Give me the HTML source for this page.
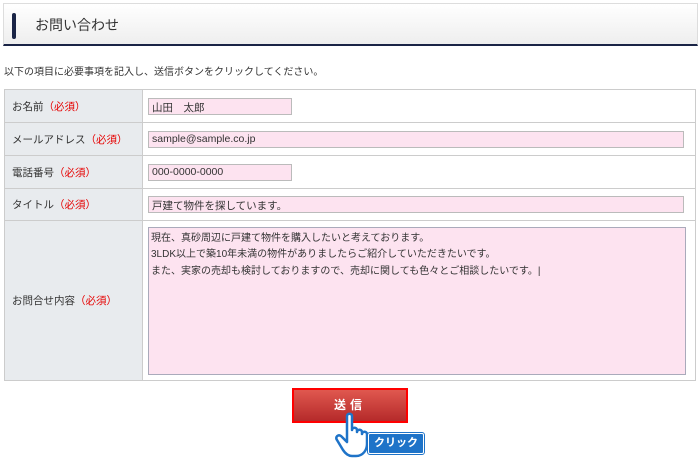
<!DOCTYPE html>
<html><head><meta charset="utf-8"><style>
body{margin:0;width:700px;height:459px;background:#fff;font-family:"Liberation Sans","Noto Sans CJK JP",sans-serif;font-size:11px;color:#333;position:relative;overflow:hidden}
.hd{position:absolute;left:3px;top:3px;width:693px;height:40px;background:linear-gradient(#fff,#eee);border:1px solid #ddd;border-bottom:2px solid #1a2446}
.hd .bar{position:absolute;left:8px;top:9px;width:4px;height:26px;background:#1a2446;border-radius:2px}
.hd span{position:absolute;left:31px;top:11px;font-size:14px;color:#333}
.lead{position:absolute;left:4px;top:63px;font-size:10px}
table{position:absolute;left:4px;top:89px;width:692px;border-collapse:collapse}
td{border:1px solid #ccc;font-size:10.5px;padding:0}
td.l{width:130px;background:#e8ebee;padding-left:7px}
td.l b{color:#e60000;font-weight:normal}
.in{background:#fde3f0;border:1px solid #bbb;height:17px;box-sizing:border-box;font-size:10.5px;padding:1px 3px;margin-left:5px}
.ta{background:#fde3f0;border:1px solid #aab;height:148px;margin:5px 9px 5px 5px;box-sizing:border-box;padding:3px 2px;line-height:16.5px;font-size:10px}
.btn{position:absolute;left:292px;top:388px;width:112px;height:31px;border:2px solid #f00;background:linear-gradient(#e0584f,#b52a2a);color:#fff;font-weight:bold;font-size:12px;text-align:center;line-height:31px;letter-spacing:4px}
.ck{position:absolute;left:368px;top:433px;width:54px;height:19px;background:#1e73c8;border:1px solid #fff;outline:1px solid #1e73c8;color:#fff;font-weight:bold;font-size:11px;text-align:center;line-height:19px;border-radius:2px}
</style></head><body>
<div class="hd"><div class="bar"></div><span>お問い合わせ</span></div>
<div class="lead">以下の項目に必要事項を記入し、送信ボタンをクリックしてください。</div>
<table>
<tr style="height:33px"><td class="l">お名前<b>（必須）</b></td><td><div class="in" style="width:144px">山田　太郎</div></td></tr>
<tr style="height:33px"><td class="l">メールアドレス<b>（必須）</b></td><td><div class="in" style="width:536px">sample@sample.co.jp</div></td></tr>
<tr style="height:33px"><td class="l">電話番号<b>（必須）</b></td><td><div class="in" style="width:144px">000-0000-0000</div></td></tr>
<tr style="height:32px"><td class="l">タイトル<b>（必須）</b></td><td><div class="in" style="width:536px">戸建て物件を探しています。</div></td></tr>
<tr style="height:160px"><td class="l">お問合せ内容<b>（必須）</b></td><td><div class="ta">現在、真砂周辺に戸建て物件を購入したいと考えております。<br>3LDK以上で築10年未満の物件がありましたらご紹介していただきたいです。<br>また、実家の売却も検討しておりますので、売却に関しても色々とご相談したいです。|</div></td></tr>
</table>
<div class="btn">送信</div>
<svg style="position:absolute;left:334px;top:412px" width="40" height="47" viewBox="0 0 40 47"><path d="M13 4c0-3 5-3 5 0v14c0-3 5-3 5 0v2c0-3 5-3 5 0v2c0-3 5-3 5 0v10c0 6-4 12-11 12h-4c-4 0-7-3-9-6L3 28c-2-3 1-6 4-4l6 6z" fill="#fff" stroke="#1e73c8" stroke-width="2.5" stroke-linejoin="round"/></svg>
<div class="ck">クリック</div>
</body></html>
